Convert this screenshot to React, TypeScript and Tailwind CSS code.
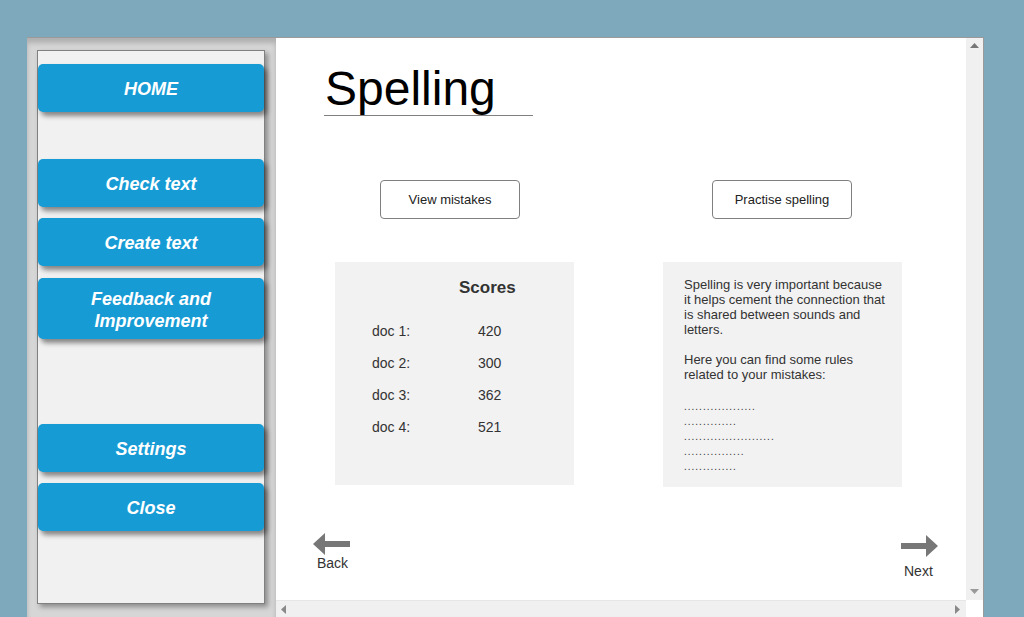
const navTop = [
  { label: "HOME", mt: "mt-[13px]", h: "h-12" },
  { label: "Check text", mt: "mt-[47px]", h: "h-12" },
  { label: "Create text", mt: "mt-[11px]", h: "h-12" },
  { label: "Feedback and Improvement", mt: "mt-[12px]", h: "h-[61px]" },
];

const navBottom = [
  { label: "Settings", mt: "mt-[85px]", h: "h-12" },
  { label: "Close", mt: "mt-[11px]", h: "h-12" },
];

const scores = [
  { doc: "doc 1:", score: 420 },
  { doc: "doc 2:", score: 300 },
  { doc: "doc 3:", score: 362 },
  { doc: "doc 4:", score: 521 },
];

const dots = [19, 14, 24, 16, 14];

function NavButton({ label, mt, h }: { label: string; mt: string; h: string }) {
  return (
    <button
      className={`${mt} ${h} w-full shrink-0 rounded-[5px] bg-[#179bd5] px-10 pt-[2px] text-[18px] font-bold italic leading-[22px] text-white shadow-[3px_4px_5px_rgba(0,0,0,0.45)]`}
    >
      {label}
    </button>
  );
}

function Arrow({ dir }: { dir: "left" | "right" }) {
  return (
    <svg width="37" height="22" viewBox="0 0 37 22">
      {dir === "left" ? (
        <path d="M0 11 L12 0 L12 8 L37 8 L37 14 L12 14 L12 22 Z" fill="#777777" />
      ) : (
        <path d="M37 11 L25 0 L25 8 L0 8 L0 14 L25 14 L25 22 Z" fill="#777777" />
      )}
    </svg>
  );
}

export default function App() {
  return (
    <div
      className="h-[617px] w-[1024px] overflow-hidden bg-[#7ea9bd] pl-[27px] pt-[37px]"
      style={{ fontFamily: '"Liberation Sans", Arial, sans-serif' }}
    >
      <div className="flex h-[580px] w-[957px] border-r border-t border-[#9a9a9a]">
        {/* sidebar */}
        <div className="w-[249px] shrink-0 bg-[#d6d6d6] pl-[10px] pt-[12px] shadow-[inset_0_5px_5px_rgba(0,0,0,0.18)]">
          <div className="flex h-[554px] w-[228px] flex-col border border-[#808080] bg-[#f1f1f1] shadow-[3px_3px_5px_rgba(0,0,0,0.35)]">
            {navTop.map((b) => (
              <NavButton key={b.label} {...b} />
            ))}
            {navBottom.map((b) => (
              <NavButton key={b.label} {...b} />
            ))}
          </div>
        </div>

        {/* content + scrollbars */}
        <div className="flex flex-1 flex-col">
          <div className="flex flex-1">
            <div className="flex flex-1 flex-col bg-white text-[#333]">
              <div className="ml-[48px] mt-[27px] w-[209px] border-b border-[#808080] pb-[2px] pl-[1px] text-[48px] leading-[48px] text-black">
                Spelling
              </div>

              <div className="ml-[59px] mt-[64px] grid grid-cols-[239px_239px] gap-x-[89px]">
                <button className="ml-[45px] h-[39px] w-[140px] rounded-[4px] border border-[#808080] bg-white text-[13px] text-[#222]">
                  View mistakes
                </button>
                <button className="ml-[49px] h-[39px] w-[140px] rounded-[4px] border border-[#808080] bg-white text-[13px] text-[#222]">
                  Practise spelling
                </button>

                <div className="mt-[43px] h-[223px] bg-[#f2f2f2] pt-[16px]">
                  <div className="ml-[124px] text-[17px] font-bold leading-[20px] text-[#333]">Scores</div>
                  <div className="mt-[25px] flex flex-col gap-y-[16px]">
                    {scores.map((s) => (
                      <div key={s.doc} className="flex text-[14px] leading-[16px]">
                        <span className="ml-[37px] w-[106px]">{s.doc}</span>
                        <span>{s.score}</span>
                      </div>
                    ))}
                  </div>
                </div>

                <div className="mt-[43px] h-[225px] bg-[#f2f2f2] pl-[21px] pr-[12px] pt-[15px] text-[13px] leading-[15px] text-[#333]">
                  <p>
                    Spelling is very important because it helps cement the connection that is shared between sounds
                    and letters.
                  </p>
                  <p className="mt-[15px]">Here you can find some rules related to your mistakes:</p>
                  <div className="mt-[17px] flex flex-col">
                    {dots.map((n, i) => (
                      <span key={i} className="text-[10px] leading-[15px] tracking-[1px]">
                        {".".repeat(n)}
                      </span>
                    ))}
                  </div>
                </div>
              </div>

              <div className="mt-[46px] flex justify-between pl-[37px] pr-[28px]">
                <div className="flex flex-col items-start">
                  <Arrow dir="left" />
                  <span className="ml-[4px] text-[14px] leading-[16px] text-[#333]">Back</span>
                </div>
                <div className="mt-[2px] flex flex-col items-start">
                  <Arrow dir="right" />
                  <span className="ml-[3px] mt-[6px] text-[14px] leading-[16px] text-[#333]">Next</span>
                </div>
              </div>
            </div>

            {/* vertical scrollbar */}
            <div className="flex w-[17px] shrink-0 flex-col items-center justify-between bg-[#f0f0f0] pb-[6px] pt-[5px]">
              <svg width="9" height="5" viewBox="0 0 9 5">
                <path d="M0 5 L4.5 0 L9 5 Z" fill="#777" />
              </svg>
              <svg width="9" height="5" viewBox="0 0 9 5">
                <path d="M0 0 L4.5 5 L9 0 Z" fill="#999" />
              </svg>
            </div>
          </div>

          {/* horizontal scrollbar */}
          <div className="flex h-[17px] shrink-0">
            <div className="flex flex-1 items-center justify-between border-t border-[#e6e6e6] bg-[#f0f0f0] pl-[5px] pr-[6px]">
              <svg width="5" height="9" viewBox="0 0 5 9">
                <path d="M5 0 L0 4.5 L5 9 Z" fill="#888" />
              </svg>
              <svg width="5" height="9" viewBox="0 0 5 9">
                <path d="M0 0 L5 4.5 L0 9 Z" fill="#888" />
              </svg>
            </div>
            <div className="w-[17px] bg-white" />
          </div>
        </div>
      </div>
    </div>
  );
}
